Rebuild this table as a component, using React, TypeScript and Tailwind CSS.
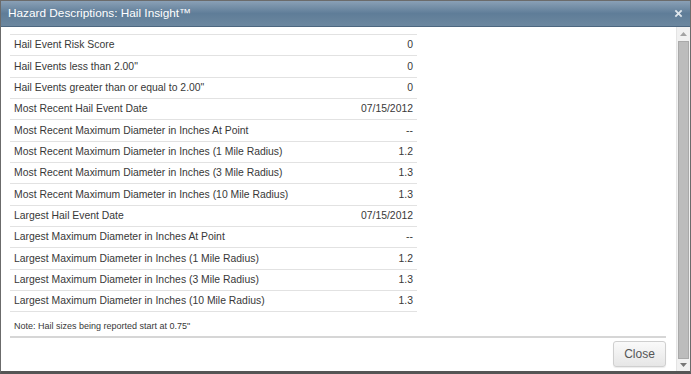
const rows: [string, string][] = [
    ['Hail Event Risk Score', '0'],
    ['Hail Events less than 2.00"', '0'],
    ['Hail Events greater than or equal to 2.00"', '0'],
    ['Most Recent Hail Event Date', '07/15/2012'],
    ['Most Recent Maximum Diameter in Inches At Point', '--'],
    ['Most Recent Maximum Diameter in Inches (1 Mile Radius)', '1.2'],
    ['Most Recent Maximum Diameter in Inches (3 Mile Radius)', '1.3'],
    ['Most Recent Maximum Diameter in Inches (10 Mile Radius)', '1.3'],
    ['Largest Hail Event Date', '07/15/2012'],
    ['Largest Maximum Diameter in Inches At Point', '--'],
    ['Largest Maximum Diameter in Inches (1 Mile Radius)', '1.2'],
    ['Largest Maximum Diameter in Inches (3 Mile Radius)', '1.3'],
    ['Largest Maximum Diameter in Inches (10 Mile Radius)', '1.3']
]

function App() {
    return (
        <div
            className="w-[691px] h-[374px] flex flex-col bg-white border border-[#6b6b6b] border-b-[3px] border-b-[#555] overflow-hidden"
            style={{ fontFamily: '"Liberation Sans", Arial, sans-serif' }}
        >
            <div className="h-[26px] shrink-0 flex items-center justify-between pl-[7px] pr-[7px] bg-gradient-to-b from-[#8aa0b6] via-[#5f7d98] to-[#6c879f] border-b border-[#4d6780]">
                <span className="text-white text-[11.8px]">
                    Hazard Descriptions: Hail Insight™
                </span>
                <svg width="9" height="9" viewBox="0 0 10 10">
                    <path
                        d="M1.5 1.5 L8.5 8.5 M8.5 1.5 L1.5 8.5"
                        stroke="#dfe6ec"
                        strokeWidth="2"
                    />
                </svg>
            </div>
            <div className="flex flex-1 min-h-0">
                <div className="flex-1 flex flex-col pl-[9px] pr-[10px]">
                    <div className="mt-[7px] w-[407px] border-t border-[#e2e2e2]">
                        {rows.map(([label, value]) => (
                            <div
                                key={label}
                                className="h-[21.33px] flex items-center justify-between px-[4px] border-b border-[#e2e2e2] text-[10.4px] text-[#383838]"
                            >
                                <span>{label}</span>
                                <span>{value}</span>
                            </div>
                        ))}
                    </div>
                    <div className="mt-[8px] pl-[4px] text-[9px] text-[#383838]">
                        Note: Hail sizes being reported start at 0.75"
                    </div>
                    <div className="mt-auto border-b-2 border-[#d6d6d6]"></div>
                    <div className="h-[33px] flex items-center justify-end pb-[2px]">
                        <button className="w-[53px] h-[26px] rounded-[3px] border border-[#cfcfcf] bg-gradient-to-b from-[#fafafa] to-[#e6e6e6] text-[12px] text-[#555] shadow-[0_1px_1px_rgba(0,0,0,0.08)]">
                            Close
                        </button>
                    </div>
                </div>
                <div className="w-[14px] flex flex-col bg-[#f1f1f1] border-l border-[#e4e4e4]">
                    <div className="h-[14px] flex items-center justify-center">
                        <svg width="7" height="4" viewBox="0 0 7 4">
                            <path d="M0 4 L3.5 0 L7 4 Z" fill="#a3a3a3" />
                        </svg>
                    </div>
                    <div className="flex-1 mx-[1px] bg-[#bcbcbc] border border-[#a9a9a9]"></div>
                    <div className="h-[12px] flex items-center justify-center">
                        <svg width="7" height="4" viewBox="0 0 7 4">
                            <path d="M0 0 L3.5 4 L7 0 Z" fill="#777" />
                        </svg>
                    </div>
                </div>
            </div>
        </div>
    )
}

export default App
